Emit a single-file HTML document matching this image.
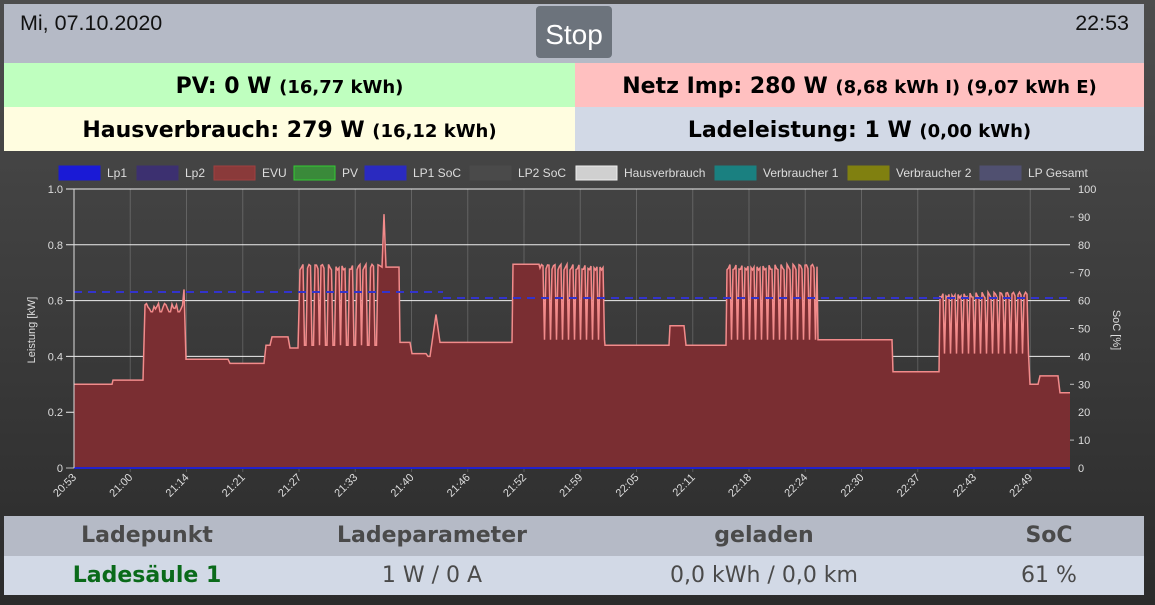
<!DOCTYPE html>
<html><head><meta charset="utf-8"><style>
*{margin:0;padding:0;box-sizing:border-box}
body{width:1155px;height:605px;overflow:hidden;background:linear-gradient(#4d4d4d,#2b2b2b);font-family:"DejaVu Sans","Liberation Sans",sans-serif;position:relative}
.abs{position:absolute}
.hdr{left:4px;top:4px;width:1140px;height:59px;background:#b5bac6}
.date{left:20px;top:11px;font-size:21.5px;color:#111;font-family:"Liberation Sans",sans-serif}
.time{right:26px;top:11px;font-size:21.5px;color:#111;font-family:"Liberation Sans",sans-serif}
.stop{left:536px;top:6px;width:76px;height:52px;background:#6c737c;border-radius:4px;color:#fff;font-size:28px;text-align:center;line-height:58px;font-family:"Liberation Sans",sans-serif}
.cell{height:44px;text-align:center;font-weight:bold;font-size:22px;line-height:48px;color:#000}
.cell small{font-size:18px}
</style></head><body>
<div class="abs hdr"></div>
<div class="abs date">Mi, 07.10.2020</div>
<div class="abs time">22:53</div>
<div class="abs stop">Stop</div>
<div class="abs cell" style="left:4px;top:63px;width:571px;background:#bfffbf">PV: 0 W <small>(16,77 kWh)</small></div>
<div class="abs cell" style="left:575px;top:63px;width:569px;background:#ffc0c0">Netz Imp: 280 W <small>(8,68 kWh I) (9,07 kWh E)</small></div>
<div class="abs cell" style="left:4px;top:107px;width:571px;background:#fffde0">Hausverbrauch: 279 W <small>(16,12 kWh)</small></div>
<div class="abs cell" style="left:575px;top:107px;width:569px;background:#d2d9e6">Ladeleistung: 1 W <small>(0,00 kWh)</small></div>

<svg class="abs" style="left:0;top:150px" width="1155" height="366" viewBox="0 150 1155 366" font-family="Liberation Sans, sans-serif">
<g id="legend" font-size="12" fill="#ddd"></g>
<g id="grid"></g>
<path id="area" fill="#7a2e32" stroke="none"/>
<path id="line" fill="none" stroke="#f28b8b" stroke-width="1.5"/>
<line x1="74" y1="468" x2="1070" y2="468" stroke="#2222cc" stroke-width="2"/>
<path d="M74 292H443M443 298H1070" stroke="#3333cc" stroke-width="2" stroke-dasharray="8,6"/>
<line x1="74" y1="189" x2="74" y2="468" stroke="#ddd"/>
<text x="35" y="330" font-size="11" fill="#ddd" transform="rotate(-90 35 330)" text-anchor="middle">Leistung [kW]</text>
<text x="1113" y="330" font-size="11" fill="#ddd" transform="rotate(90 1113 330)" text-anchor="middle">SoC [%]</text>
<g id="labels" font-size="11" fill="#ddd"></g>
</svg>

<div class="abs" style="left:4px;top:516px;width:1140px;height:40px;background:#b5bac6"></div>
<div class="abs" style="left:4px;top:556px;width:1140px;height:39px;background:#d2d9e6"></div>
<div class="abs" style="top:523px;left:4px;width:1140px;font-weight:bold;font-size:22px;color:#4a4a4a">
<span class="abs" style="left:143px;transform:translateX(-50%)">Ladepunkt</span>
<span class="abs" style="left:428px;transform:translateX(-50%)">Ladeparameter</span>
<span class="abs" style="left:760px;transform:translateX(-50%)">geladen</span>
<span class="abs" style="left:1045px;transform:translateX(-50%)">SoC</span>
</div>
<div class="abs" style="top:563px;left:4px;width:1140px;font-size:22px;color:#4a4a4a">
<span class="abs" style="left:143px;transform:translateX(-50%);font-weight:bold;color:#0a6a1a;white-space:nowrap">Ladesäule 1</span>
<span class="abs" style="left:428px;transform:translateX(-50%);white-space:nowrap">1 W / 0 A</span>
<span class="abs" style="left:760px;transform:translateX(-50%);white-space:nowrap">0,0 kWh / 0,0 km</span>
<span class="abs" style="left:1045px;transform:translateX(-50%);white-space:nowrap">61 %</span>
</div>
<script>
var NS="http://www.w3.org/2000/svg";
function el(p,t,a,txt){var e=document.createElementNS(NS,t);for(var k in a)e.setAttribute(k,a[k]);if(txt!=null)e.textContent=txt;p.appendChild(e);return e;}
var lg=document.getElementById('legend');
var items=[["Lp1","#1a1ad6","#1a1ad6",59],["Lp2","#3c3070","#3c3070",137],["EVU","#8a3a3a","#a04040",214],["PV","#3a8a3a","#33cc33",294],["LP1 SoC","#2a2ac0","#2a2ac0",365],["LP2 SoC","#4a4a4a","#4a4a4a",470],["Hausverbrauch","#d0d0d0","#eee",576],["Verbraucher 1","#1a8080","#1a8080",715],["Verbraucher 2","#808010","#808010",848],["LP Gesamt","#505070","#505070",980]];
items.forEach(function(it){el(lg,'rect',{x:it[3],y:166,width:41,height:14,fill:it[1],stroke:it[2]});el(lg,'text',{x:it[3]+48,y:177},it[0]);});
var g=document.getElementById('grid');
for(var i=0;i<=5;i++){var y=468-i*55.8;el(g,'line',{x1:66,x2:1070,y1:y,y2:y,stroke:i==0?'#bbb':'#eee','stroke-width':1});
el(g,'text',{x:63,y:y+4,'font-size':11,fill:'#ddd','text-anchor':'end'},i==0?'0':(i/5).toFixed(1));}
for(var i=0;i<=10;i++){var y=468-i*27.9;el(g,'text',{x:1078,y:y+4,'font-size':11,fill:'#ddd'},String(i*10));if(i%2)el(g,'line',{x1:1070,x2:1074,y1:y,y2:y,stroke:'#bbb'});}
var labs=["20:53","21:00","21:14","21:21","21:27","21:33","21:40","21:46","21:52","21:59","22:05","22:11","22:18","22:24","22:30","22:37","22:43","22:49"];
var lb=document.getElementById('labels');
labs.forEach(function(t,i){var x=74+i*56.25;if(i>0)el(g,'line',{x1:x,x2:x,y1:189,y2:472,stroke:'rgba(255,255,255,0.18)'});
el(lb,'text',{x:x+3,y:478,'text-anchor':'end',transform:'rotate(-45 '+(x+3)+' 478)'},t);});
var Y=function(v){return 468-v*279;};
var pts=[];function seg(x0,x1,v){for(var x=x0;x<x1;x+=2)pts.push([x,v]);}
function osc(x0,x1,hi,lo,per){for(var x=x0;x<x1;x+=1.5){var ph=((x-x0)%per)/per;pts.push([x,ph<0.6?hi+(Math.sin(x)*0.01):lo]);}}
seg(74,113,0.30);seg(113,145,0.315);
osc(145,183,0.58,0.56,9);pts.push([184,0.64]);seg(186,230,0.39);seg(230,266,0.375);
seg(266,272,0.44);seg(272,290,0.47);seg(290,300,0.43);
osc(300,380,0.72,0.44,7);pts.push([382,0.72],[384,0.91],[386,0.72]);seg(387,400,0.72);
seg(400,412,0.45);seg(412,428,0.41);seg(428,432,0.40);pts.push([436,0.55]);seg(440,513,0.45);
seg(513,540,0.73);osc(540,605,0.72,0.46,6);seg(605,670,0.44);seg(670,686,0.51);seg(686,727,0.44);
osc(727,818,0.72,0.46,6);seg(818,893,0.46);seg(893,940,0.345);
osc(940,1030,0.62,0.41,6);seg(1030,1040,0.30);seg(1040,1060,0.33);seg(1060,1070,0.27);pts.push([1070,0.27]);
var d="M"+pts.map(function(p){return p[0].toFixed(1)+" "+Y(p[1]).toFixed(1);}).join("L");
document.getElementById('line').setAttribute('d',d);
document.getElementById('area').setAttribute('d',d+"L1070 468L74 468Z");
</script>
</body></html>
